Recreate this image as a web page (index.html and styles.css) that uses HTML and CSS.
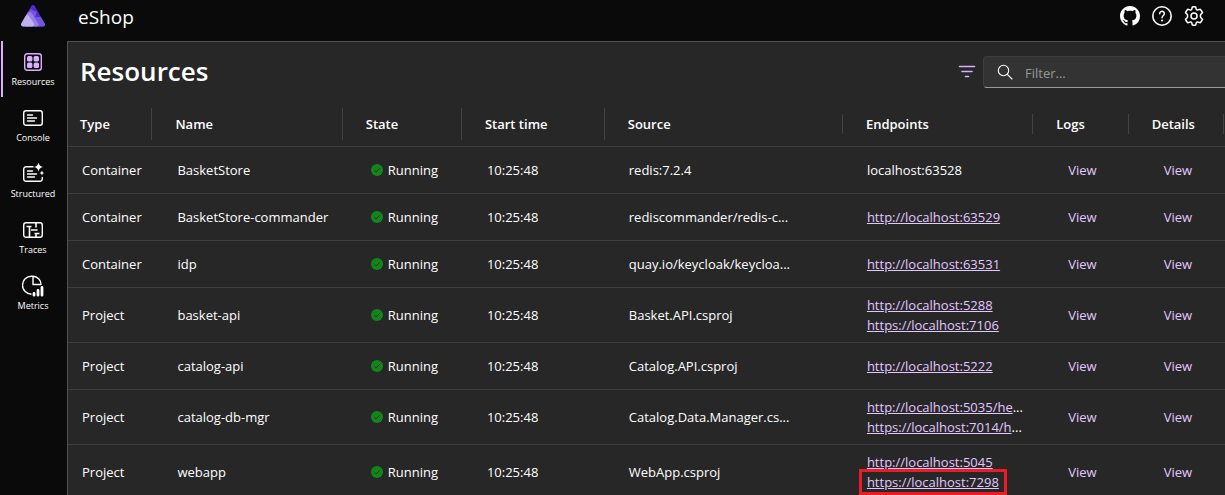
FILE: index.html
```html
<!DOCTYPE html>
<html lang="en">
<head>
<meta charset="utf-8">
<title>eShop resources</title>
<link rel="stylesheet" href="styles.css">
</head>
<body>
<svg class="defs" aria-hidden="true">
  <symbol id="ok" viewBox="0 0 12 12"><circle cx="6" cy="6" r="6" fill="#13861a"/><path d="M3.500 6.300l1.700 1.600L8.600 4.400" fill="none" stroke="#272727" stroke-width="1"/></symbol>
</svg>
<header class="topbar">
  <a class="logo" href="#" aria-label="Home">
    <svg width="24" height="22" viewBox="0 0 24 22">
      <path d="M10.300 1a2 2 0 0 1 3.400 0L23.600 18.200a2 2 0 0 1-1.800 3.300H2.200A2 2 0 0 1 .4 18.200z" fill="#512bd4"/>
      <path d="M15.800 6.500l-1.500 5.500H19.800l3.800 6.200a2 2 0 0 1-1.800 3.300H14V12H8L5.500 9.500 8.500 5.500q1.600-2.300 3.200 0z" fill="#7455dd"/>
      <path d="M5.200 9.700q1.800-3 3.500-2.700 1.300 0 2.500 1.800l6 9.700q1.500 3-2 3H4z" fill="#9780e5"/>
      <path d="M.4 18.200l4-7q1.700-2.200 3.600-.2l4.800 7.200q1 3.300-1.800 3.300H2.200Q-.8 21.300.4 18.200z" fill="#bfb2ee"/>
    </svg>
  </a>
  <span class="app-name">eShop</span>
  <div class="tools">
    <button class="tool" aria-label="GitHub"><svg width="20" height="20" viewBox="0 0 16 16" fill="#fff"><path d="M8 0C3.580 0 0 3.580 0 8c0 3.540 2.290 6.530 5.470 7.590.4.070.55-.17.55-.38 0-.19-.01-.82-.01-1.490-2.010.37-2.530-.49-2.690-.94-.09-.23-.48-.94-.82-1.130-.28-.15-.68-.52-.01-.53.63-.01 1.080.58 1.230.82.72 1.210 1.870.87 2.330.66.07-.52.28-.87.51-1.070-1.780-.2-3.640-.89-3.640-3.950 0-.87.31-1.590.82-2.150-.08-.2-.36-1.020.08-2.120 0 0 .67-.21 2.200.82.64-.18 1.320-.27 2-.27s1.360.09 2 .27c1.530-1.040 2.200-.82 2.200-.82.44 1.100.16 1.920.08 2.120.51.56.82 1.270.82 2.150 0 3.070-1.870 3.750-3.650 3.950.29.25.54.73.54 1.480 0 1.070-.01 1.930-.01 2.200 0 .21.15.46.55.38A8.010 8.010 0 0 0 16 8c0-4.420-3.580-8-8-8z"/></svg></button>
    <button class="tool" aria-label="Help"><svg width="20" height="20" viewBox="0 0 20 20" fill="none" stroke="#fff"><circle cx="10" cy="10" r="9.200" stroke-width="1.600"/><path d="M7.700 7.700a2.300 2.300 0 1 1 3.900 1.600C10.600 10.200 10 10.600 10 11.800" stroke-width="1.500" stroke-linecap="round"/><circle cx="10" cy="14.400" r="1" fill="#fff" stroke="none"/></svg></button>
    <button class="tool" aria-label="Settings"><svg width="20" height="20" viewBox="0 0 20 20" fill="none" stroke="#fff" stroke-width="1.500" stroke-linejoin="round"><path d="M8.300.9Q10 .5 11.700.9L12.200 3.100Q12.700 4.100 13.900 3.900L16.200 3.200Q17.500 4.500 18.500 6.600L16.900 8.200Q15.900 10 16.900 11.800L18.500 13.400Q17.500 15.500 16.200 16.800L13.900 16.100Q12.700 15.900 12.200 16.900L11.700 19.100Q10 19.500 8.300 19.100L7.800 16.900Q7.300 15.900 6.100 16.100L3.800 16.800Q2.500 15.500 1.500 13.400L3.100 11.800Q4.100 10 3.100 8.200L1.500 6.600Q2.500 4.500 3.800 3.200L6.100 3.900Q7.300 4.100 7.800 3.100z"/><circle cx="10" cy="10" r="3"/></svg></button>
  </div>
</header>
<div class="shell">
  <nav class="sidebar">
    <a class="nav-item active" href="#">
      <svg width="20" height="20" viewBox="0 0 20 20"><rect x="1.700" y="1.700" width="16.600" height="16.600" rx="2.500" fill="none" stroke="#d8b0ff" stroke-width="1.400"/><g fill="#d8b0ff"><rect x="4" y="4" width="5.400" height="5.400" rx="1.500"/><rect x="10.600" y="4" width="5.400" height="5.400" rx="1.500"/><rect x="4" y="10.600" width="5.400" height="5.400" rx="1.500"/><rect x="10.600" y="10.600" width="5.400" height="5.400" rx="1.500"/></g></svg>
      <span>Resources</span></a>
    <a class="nav-item" href="#">
      <svg width="20" height="20" viewBox="0 0 20 20" fill="none" stroke="#fff" stroke-width="1.400" stroke-linecap="round"><rect x=".7" y="2.700" width="18.600" height="14.600" rx="2.300"/><path d="M4.500 7h5M4.500 10h9M4.500 13h7"/></svg>
      <span>Console</span></a>
    <a class="nav-item" href="#">
      <svg width="22" height="22" viewBox="0 0 22 22" fill="none" stroke="#fff" stroke-width="1.400" stroke-linecap="round"><path d="M11 3.700H4A2.300 2.300 0 0 0 1.700 6v10A2.300 2.300 0 0 0 4 18.300h14A2.300 2.300 0 0 0 20.300 16v-1.500M5.500 8h5M5.500 11h9M5.500 14h7"/><path d="M16.500-.5q.7 3.800 4.500 4.500-3.800.7-4.500 4.500-.7-3.800-4.500-4.500 3.800-.7 4.500-4.500zM20 7.500q.4 2.100 2 2.500-1.600.4-2 2.500-.4-2.100-2.500-2.500 2.100-.4 2.500-2.500z" fill="#fff" stroke="none"/></svg>
      <span>Structured</span></a>
    <a class="nav-item" href="#">
      <svg width="20" height="20" viewBox="0 0 20 20" fill="none" stroke="#fff" stroke-width="1.400"><rect x=".7" y="2.700" width="18.600" height="14.600" rx="2.300"/><path d="M6.500 6.500V17.300M13 3v4.500M13 13v4M3.500 6.500H8.500M8 10H14.500M11.500 13.500h5" stroke-width="1.600"/></svg>
      <span>Traces</span></a>
    <a class="nav-item" href="#">
      <svg width="22" height="22" viewBox="0 0 22 22" fill="none" stroke="#fff" stroke-width="1.400"><path d="M9.500 1.200a8.800 8.800 0 0 0 0 18M11 1.200a8.300 8.300 0 0 1 8 8.300h-8zM10.500 1.200h-1" stroke-linejoin="round"/><path d="M12 18.500v1.700M16 15.500v4.700M20 12.500v7.700" stroke-width="2.800" stroke-linecap="round"/></svg>
      <span>Metrics</span></a>
  </nav>
  <main class="content">
    <div class="toolbar">
      <h1>Resources</h1>
      <button class="filter-button" aria-label="Filter options"><svg width="18" height="14" viewBox="0 0 18 14" stroke="#d8b0ff" stroke-width="1.600" stroke-linecap="round"><path d="M1.500 1.500h15M4 6.500h10M7.500 11.500h3"/></svg></button>
      <label class="search"><svg width="16" height="16" viewBox="0 0 16 16" fill="none" stroke="#fff" stroke-width="1.100" stroke-linecap="round"><circle cx="6.500" cy="6.500" r="5.200"/><path d="M10.300 10.300L15 15"/></svg><input type="text" placeholder="Filter..." aria-label="Filter"></label>
    </div>
    <table class="grid">
      <colgroup><col class="c-type"><col class="c-name"><col class="c-state"><col class="c-start"><col class="c-source"><col class="c-ends"><col class="c-logs"><col class="c-details"></colgroup>
      <thead><tr>
        <th><div class="tall">Type</div></th><th><div class="tall">Name</div></th><th><div class="tall">State</div></th><th><div class="tall">Start time</div></th><th><div>Source</div></th><th><div>Endpoints</div></th><th><div>Logs</div></th><th><div>Details</div></th>
      </tr></thead>
      <tbody>
        <tr><td>Container</td><td>BasketStore</td><td><span class="state"><svg width="12" height="12"><use href="#ok"/></svg>Running</span></td><td class="time">10:25:48</td><td>redis:7.2.4</td><td>localhost:63528</td><td><a href="#">View</a></td><td><a href="#">View</a></td></tr>
        <tr><td>Container</td><td>BasketStore-commander</td><td><span class="state"><svg width="12" height="12"><use href="#ok"/></svg>Running</span></td><td class="time">10:25:48</td><td>rediscommander/redis-c...</td><td><a class="url" href="#">http://localhost:63529</a></td><td><a href="#">View</a></td><td><a href="#">View</a></td></tr>
        <tr><td>Container</td><td>idp</td><td><span class="state"><svg width="12" height="12"><use href="#ok"/></svg>Running</span></td><td class="time">10:25:48</td><td>quay.io/keycloak/keycloa...</td><td><a class="url" href="#">http://localhost:63531</a></td><td><a href="#">View</a></td><td><a href="#">View</a></td></tr>
        <tr class="double"><td>Project</td><td>basket-api</td><td><span class="state"><svg width="12" height="12"><use href="#ok"/></svg>Running</span></td><td class="time">10:25:48</td><td>Basket.API.csproj</td><td><div><a class="url" href="#">http://localhost:5288</a></div><div><a class="url" href="#">https://localhost:7106</a></div></td><td><a href="#">View</a></td><td><a href="#">View</a></td></tr>
        <tr><td>Project</td><td>catalog-api</td><td><span class="state"><svg width="12" height="12"><use href="#ok"/></svg>Running</span></td><td class="time">10:25:48</td><td>Catalog.API.csproj</td><td><a class="url" href="#">http://localhost:5222</a></td><td><a href="#">View</a></td><td><a href="#">View</a></td></tr>
        <tr class="double"><td>Project</td><td>catalog-db-mgr</td><td><span class="state"><svg width="12" height="12"><use href="#ok"/></svg>Running</span></td><td class="time">10:25:48</td><td>Catalog.Data.Manager.cs...</td><td><div><a class="url" href="#">http://localhost:5035/he</a>...</div><div><a class="url" href="#">https://localhost:7014/h</a>...</div></td><td><a href="#">View</a></td><td><a href="#">View</a></td></tr>
        <tr class="double"><td>Project</td><td>webapp</td><td><span class="state"><svg width="12" height="12"><use href="#ok"/></svg>Running</span></td><td class="time">10:25:48</td><td>WebApp.csproj</td><td><div><a class="url" href="#">http://localhost:5045</a></div><div><a class="url marked" href="#">https://localhost:7298</a></div></td><td><a href="#">View</a></td><td><a href="#">View</a></td></tr>
      </tbody>
    </table>
  </main>
</div>
</body>
</html>
```
FILE: styles.css
```css
* { box-sizing: border-box; }
html { height: 100%; }
body {
  margin: 0;
  height: 100%;
  display: flex;
  flex-direction: column;
  overflow: hidden;
  background: #0a0a0a;
  color: #fff;
  font: 13px/20px "Open Sans", "Noto Sans", sans-serif;
}
.defs { position: absolute; width: 0; height: 0; }
button { border: 0; padding: 0; background: none; color: inherit; font: inherit; }
a { color: #e3c8ff; text-decoration: none; }
svg { display: block; flex: none; }

.topbar { display: flex; align-items: center; height: 41px; flex: none; padding: 0 21px 10px 0; }
.logo { width: 66px; display: flex; justify-content: center; }
.app-name { padding: 2px 0 0 12px; font-size: 19px; line-height: 28px; }
.tools { display: flex; gap: 12px; margin-left: auto; }

.shell { display: flex; flex: 1; min-height: 0; }
.sidebar { width: 67px; flex: none; }
.nav-item {
  display: flex;
  flex-direction: column;
  align-items: center;
  height: 56px;
  padding: 10px 1px 0 0;
  color: #fff;
  font-size: 9px;
  line-height: 14px;
}
.nav-item svg { height: 22px; }
.nav-item span { margin-top: 2px; }
.active { background: linear-gradient(#d8b0ff, #d8b0ff) 1px 0 / 2px 100% no-repeat; }

.content {
  flex: 1;
  min-width: 0;
  overflow: hidden;
  background: #272727;
  border: solid #525252;
  border-width: 1px 0 0 1px;
}
.toolbar { display: flex; align-items: center; height: 60px; padding-left: 12px; }
h1 { margin: 0 auto 0 0; padding-bottom: 2px; font-size: 26px; line-height: 36px; font-weight: 600; }
.filter-button { margin-right: 7px; }
.search {
  display: flex;
  align-items: center;
  gap: 12px;
  width: 242px;
  height: 32px;
  padding-left: 13px;
  background: #333;
  border: 1px solid #3d3d3d;
  border-width: 1px 0 1px 1px;
  border-bottom-color: #9a9a9a;
  border-radius: 4px 0 0 4px;
}
.search input { flex: 1; min-width: 0; border: 0; padding: 1px 0 0; background: none; color: #fff; font: inherit; outline: 0; }
.search input::placeholder { color: #999; opacity: 1; }

.grid { width: 100%; table-layout: fixed; border-collapse: separate; border-spacing: 0; }
.c-type, .c-logs { width: 8.250%; }
.c-name, .c-ends { width: 16.450%; }
.c-state { width: 10.300%; }
.c-start { width: 12.350%; }
.c-source { width: 20.580%; }
th, td { border-bottom: 1px solid #3d3d3d; text-align: left; white-space: nowrap; }
th { height: 45px; padding: 0 11px 0 12px; font-weight: 600; }
th div { border-right: 1px solid #434343; line-height: 20px; }
th .tall { line-height: 32px; }
th:last-child { padding-right: 1px; }
td { height: 47px; padding: 0 0 0 14px; }
.double td { height: 55px; }
td:nth-child(n+5) { padding-left: 13px; }
td:nth-child(n+7) { padding-left: 24px; }
.state { display: flex; align-items: center; gap: 5px; padding-left: 3px; }
.url { text-decoration: underline; }
.marked { position: relative; }
.marked::after {
  content: "";
  position: absolute;
  inset: -4px -8px -4px -8px;
  border: 3px solid #ed1c24;
}
```
